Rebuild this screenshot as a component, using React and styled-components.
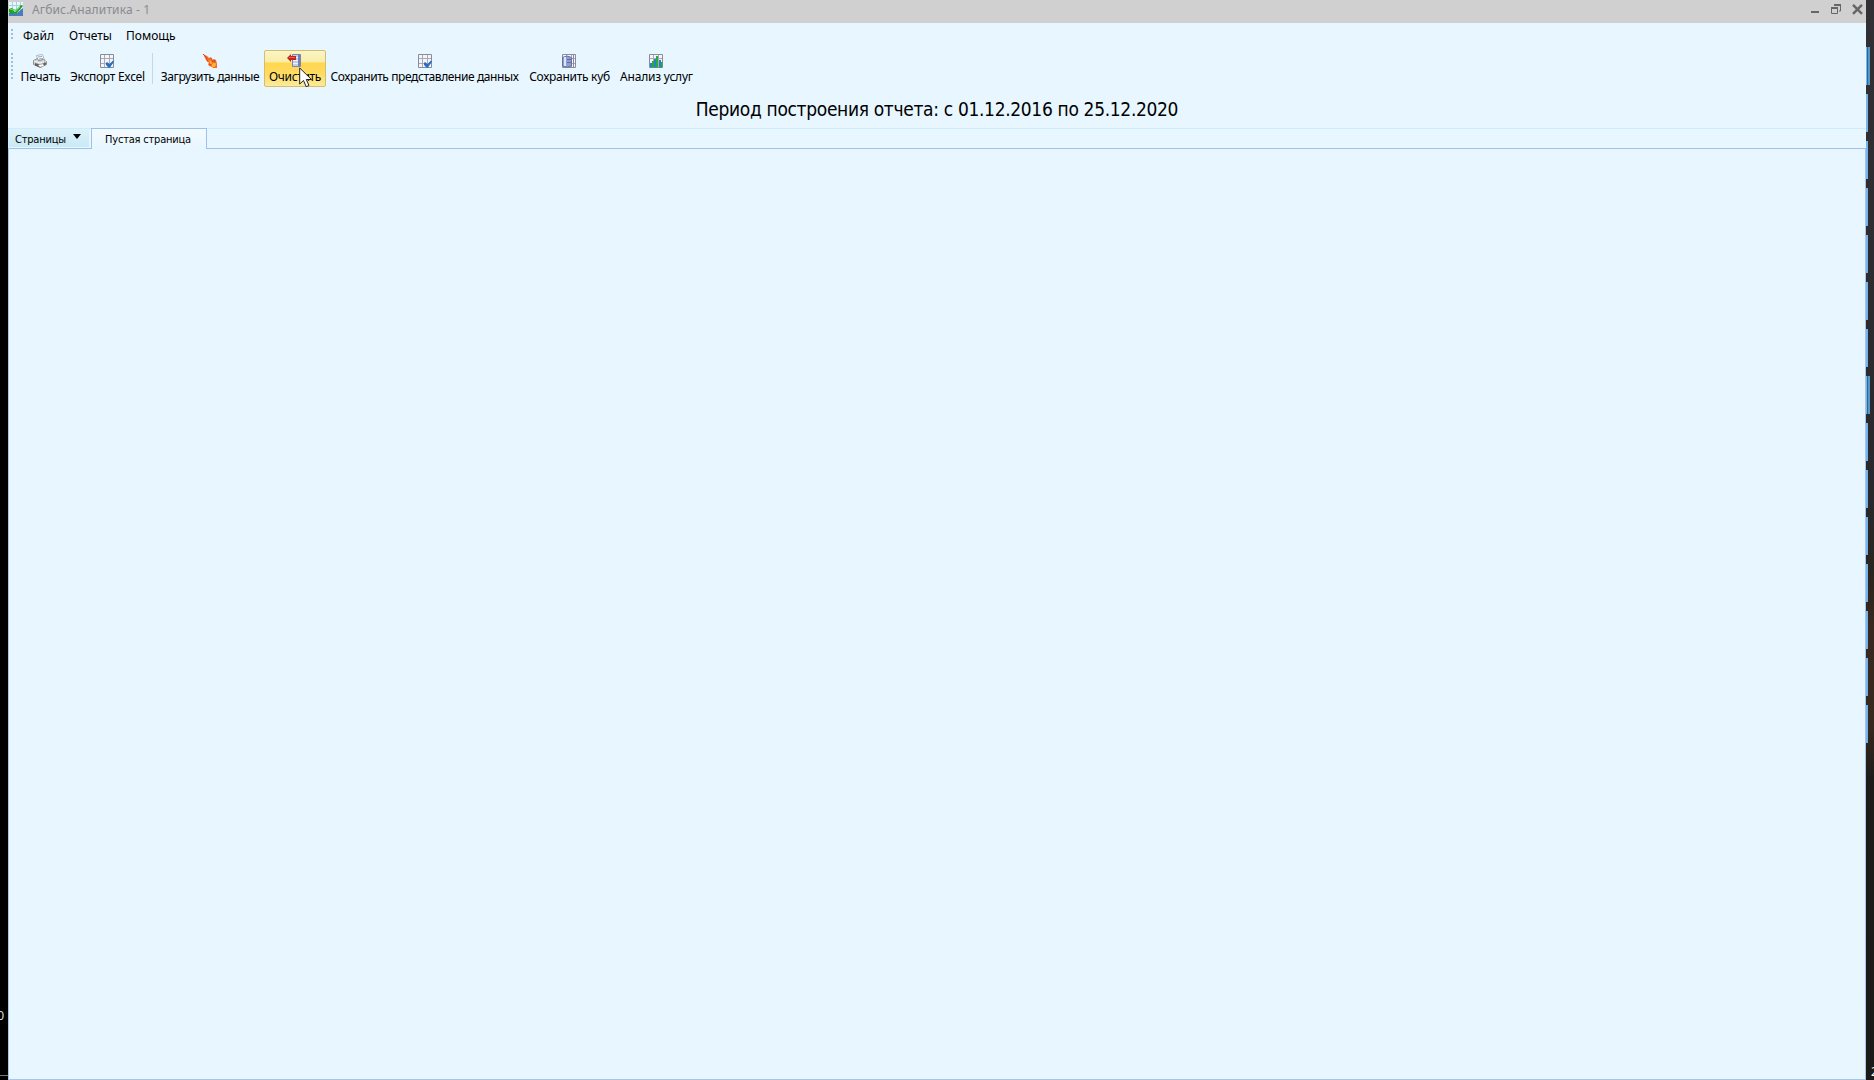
import React from "react";
import styled, { createGlobalStyle } from "styled-components";

const GlobalStyle = createGlobalStyle`
  * { box-sizing: border-box; }
  body { margin: 0; background: #000; overflow: hidden; }
`;

const Desktop = styled.div`
  display: grid;
  grid-template-columns: 8px 1858px 8px;
  width: 1874px;
  height: 1080px;
  overflow: hidden;
  background: #000;
  color: #000;
  font-family: "Noto Sans", "Open Sans", sans-serif;
  font-size: 12px;
  line-height: 16px;
  white-space: nowrap;
`;

const LeftEdge = styled.div`
  display: flex;
  flex-direction: column;
  justify-content: flex-end;
  align-items: flex-end;
  overflow: hidden;
  background: #000;
`;

const EdgeLabel = styled.span`
  color: #ddd;
  font-size: 12px;
  line-height: 16px;
  padding-right: 4px;
`;

const EdgeRule = styled.div`
  width: 8px;
  height: 1px;
  margin: 51px 0 4px;
  background: #777;
`;

const RightEdge = styled.div`
  display: flex;
  flex-direction: column;
  gap: 9px;
  padding-top: 47px;
  overflow: hidden;
  background: linear-gradient(#303035 0, #29292d 45%, #29251f 53%, #38281f 58%, #38291f 67%, #1e1c1a 72%, #1a1a19 100%);
`;

const Strip = styled.div`
  flex: none;
  width: ${(p) => (p.$active ? 4 : 2)}px;
  height: 38px;
  background: ${(p) =>
    p.$active
      ? "linear-gradient(90deg, #73b7f1 1px, #32658f 1px, #32658f 2px, #5598c7 2px)"
      : "#74b5ee"};
`;

const CornerLabel = styled.span`
  margin-top: auto;
  padding-left: 5px;
  color: #fff;
  font-size: 12px;
  line-height: 16px;
`;

const Window = styled.main`
  display: flex;
  flex-direction: column;
  min-width: 0;
  background: #e7f6ff;
`;

const TitleBar = styled.header`
  display: flex;
  align-items: flex-start;
  height: 23px;
  padding: 2px 3px 0 1px;
  background: #d0d0d0;
`;

const WindowTitle = styled.span`
  margin-left: 9px;
  color: #898b91;
  line-height: 15px;
  letter-spacing: 0.14px;
`;

const WindowButtons = styled.div`
  display: flex;
  gap: 11px;
  margin-left: auto;
  padding-top: 2px;
`;

const MenuBar = styled.nav`
  display: flex;
  align-items: center;
  height: 26px;
  padding-left: 3px;
`;

const Grip = styled.div`
  flex: none;
  width: 2px;
  height: ${(p) => p.$height}px;
  margin: ${(p) => p.$margin || "0"};
  background: repeating-linear-gradient(#9fbfdf 0, #9fbfdf 2px, transparent 2px, transparent 4px);
`;

const MenuItem = styled.span`
  width: ${(p) => p.$width}px;
`;

const ToolBar = styled.div`
  display: flex;
  align-items: flex-start;
  height: 44px;
  padding: 1px 0 0 3px;
`;

const ToolButton = styled.button`
  display: flex;
  flex: none;
  flex-direction: column;
  align-items: center;
  width: ${(p) => p.$width}px;
  height: 37px;
  margin: 0 0 0 ${(p) => p.$gap || 0}px;
  padding: 3px 0 0;
  border: 1px solid ${(p) => (p.$hot ? "#d6bd6b" : "transparent")};
  border-radius: 2px;
  background: ${(p) =>
    p.$hot ? "linear-gradient(#fbf5c8 0, #f8eda6 11px, #ffd64f 12px, #ffdc65 24px, #f9eda0 36px)" : "transparent"};
  color: inherit;
  font: inherit;
  line-height: 16px;

  svg {
    margin-left: ${(p) => Math.max(p.$nudge || 0, 0)}px;
    margin-right: ${(p) => Math.max(-(p.$nudge || 0), 0)}px;
  }
`;

const ToolLabel = styled.span`
  margin-top: 1px;
  letter-spacing: ${(p) => p.$track}px;
`;

const Divider = styled.div`
  width: 1px;
  height: 31px;
  margin: 3px 4px 0 3px;
  background: #c5d8e8;
`;

const Period = styled.h1`
  display: flex;
  align-items: center;
  justify-content: center;
  height: 35px;
  margin: 0;
  padding-bottom: 4px;
  font-family: "DejaVu Sans Condensed", "DejaVu Sans", sans-serif;
  font-stretch: condensed;
  font-size: 19px;
  font-weight: 400;
  letter-spacing: -0.33px;
  line-height: 24px;
`;

const TabStrip = styled.div`
  display: flex;
  height: 21px;
  border-top: 1px solid #ccecfb;
  border-bottom: 1px solid #9cc2ea;
  border-left: 1px solid #ccecfb;
  font-family: "DejaVu Sans Condensed", "DejaVu Sans", sans-serif;
  font-stretch: condensed;
  font-size: 11px;
  letter-spacing: -0.2px;
`;

const PagesButton = styled.div`
  display: flex;
  align-items: center;
  justify-content: space-between;
  width: 80px;
  height: 18px;
  padding: 3px 8px 0 6px;
  background: linear-gradient(#ddf2fb, #c9e9f5);
`;

const Caret = styled.i`
  margin-bottom: 6px;
  border: 4px solid transparent;
  border-top: 5px solid #000;
  border-bottom: 0;
`;

const Tab = styled.div`
  width: 116px;
  height: 21px;
  margin: -1px 0 -1px 2px;
  padding: 3px 0 0 13px;
  border: 1px solid #9cc2ea;
  border-bottom: 0;
  background: linear-gradient(#f3faff, #e7f6ff);
`;

const Page = styled.section`
  flex: 1;
  border: 1px solid #a7c5e8;
  border-top: 0;
`;

const Pointer = styled.svg`
  position: absolute;
  left: 299px;
  top: 67px;
  pointer-events: none;
`;

const Icon = ({ children }) => (
  <svg width="14" height="14" viewBox="0 0 14 14">
    {children}
  </svg>
);

const GridLines = () => (
  <>
    <path d="M.5 .5h13v13H.5z" fill="#f3f5fb" stroke="#8b8b9d" />
    <path d="M4.5 1v12M9.5 1v12M1 4.5h12M1 9.5h12" fill="none" stroke="#a8a9b8" />
  </>
);

const AppIcon = () => (
  <Icon>
    <rect width="14" height="14" fill="#e9f6fa" />
    <path d="M0 3.5h14M0 7.5h14M3.5 0v11M7.5 0v11M11.5 0v11" stroke="#a9cfe2" />
    <path d="M0 11l4-2 4 2 6-5v8H0z" fill="#4c7bc0" />
    <path d="M0 7l3-1 3 3 6-6 2 1-7 8-2-1-3 1-2-2z" fill="#18a623" />
    <path d="M1 7l3 1 2 2 5-5" stroke="#70df42" fill="none" />
  </Icon>
);

const PrinterIcon = () => (
  <Icon>
    <path d="M3.5 1.5l6-1 2 6H5z" fill="#fff" stroke="#aeb6c0" />
    <path d="M5 3l4-.5M6 5l4-.5" stroke="#7da6cf" />
    <path d="M.5 6.5l4-2 1 2 5-1 3 2v3l-6 3-7-3z" fill="#cfd0d0" stroke="#8d8f91" />
    <path d="M1 7l6 2 6-2" stroke="#f6f6f6" fill="none" />
    <path d="M2 9l5 1.5 6-2v2l-6 3-5-2z" fill="#606366" />
    <path d="M5 11l5-1 1 2-4 1z" fill="#f8f8f2" />
    <path d="M11 8h1" stroke="#54a541" />
  </Icon>
);

const CheckGridIcon = () => (
  <Icon>
    <GridLines />
    <path d="M6 9l1-1 2.5 2L13 6.5l1 1-4 6-1 .5-3-3z" fill="#2670c1" />
  </Icon>
);

const LoadIcon = () => (
  <Icon>
    <path d="M0 0l4 2 2 2 2-1 1 3 2-1 2 1 1 4v4h-4l-1-1-3-1-1-2 1-1-2-2-1-1-1-2z" fill="#f56c21" />
    <path d="M4 4l2 4 2-2 1 4 3-2 1 2-1 3H9l-2-4z" fill="#ffb13b" />
    <path d="M0 0l3 3 2 5M6 10l3 1M8 4l2 4M11 6l1 3" stroke="#d84822" fill="none" />
  </Icon>
);

const ClearIcon = () => (
  <Icon>
    <path d="M5.5 .5h8v12h-8z" fill="#c3cdec" stroke="#7b83a8" />
    <path d="M6 3.5h6M6 6.5h6M6 9.5h6" stroke="#edf1fb" />
    <path d="M12 1v11" stroke="#7682b4" strokeWidth="2" />
    <path d="M0 4l4-4v2h5v4H4v2z" fill="#c7221c" />
    <path d="M2 3.5h6" stroke="#f06243" />
  </Icon>
);

const CubeIcon = () => (
  <Icon>
    <GridLines />
    <path d="M11.5 1v12" stroke="#8789a4" />
    <path d="M.5 3.5q4.500-3 9 0v8.500q-4.500 2.500-9 0z" fill="#8f9fcf" stroke="#67739f" />
    <path d="M3 3v9" stroke="#dce5fb" strokeWidth="2" />
    <path d="M5 5.500h4M5 8.500h4" stroke="#5f6da6" />
  </Icon>
);

const ChartIcon = () => (
  <Icon>
    <GridLines />
    <path d="M1 9h2v4.500H1zM5 5h2v8.500H5zM10 6h2v7.500h-2z" fill="#2683bd" />
    <path d="M3 7h2v6.500H3zM7 2h2v11.500H7zM12 8h1.500v5.500H12z" fill="#28ab3d" />
  </Icon>
);

const tools = [
  { label: "Печать", icon: PrinterIcon, width: 47, gap: 4, track: -0.2, nudge: -1 },
  { label: "Экспорт Excel", icon: CheckGridIcon, width: 83, gap: 2, track: -0.28, nudge: -1 },
  { divider: true },
  { label: "Загрузить данные", icon: LoadIcon, width: 106, gap: 0, track: -0.4 },
  { label: "Очистить", icon: ClearIcon, width: 62, gap: 1, track: -0.35, nudge: -2, hot: true },
  { label: "Сохранить представление данных", icon: CheckGridIcon, width: 195, gap: 1, track: -0.41, nudge: 1 },
  { label: "Сохранить куб", icon: CubeIcon, width: 89, gap: 3, track: -0.28, nudge: -1 },
  { label: "Анализ услуг", icon: ChartIcon, width: 81, gap: 2, track: -0.2, nudge: -1 },
];

export default function App() {
  return (
    <>
      <GlobalStyle />
      <Desktop>
        <LeftEdge>
          <EdgeLabel>0</EdgeLabel>
          <EdgeRule />
        </LeftEdge>
        <Window>
          <TitleBar>
            <AppIcon />
            <WindowTitle>Агбис.Аналитика - 1</WindowTitle>
            <WindowButtons>
              <svg width="10" height="11"><path d="M1 8h8" stroke="#666" strokeWidth="2" /></svg>
              <svg width="10" height="11">
                <path d="M.5 4h6v5.5h-6z" fill="none" stroke="#666" />
                <path d="M0 4h7M3 1h7" stroke="#666" strokeWidth="2" />
                <path d="M9.5 1v6H8" fill="none" stroke="#666" />
              </svg>
              <svg width="11" height="11"><path d="M1 .8l9 9M10 .8l-9 9" stroke="#666" strokeWidth="2.4" /></svg>
            </WindowButtons>
          </TitleBar>
          <MenuBar>
            <Grip $height={10} $margin="-5px 10px 0 0" />
            <MenuItem $width={46}>Файл</MenuItem>
            <MenuItem $width={57}>Отчеты</MenuItem>
            <MenuItem $width={60}>Помощь</MenuItem>
          </MenuBar>
          <ToolBar>
            <Grip $height={26} $margin="3px 0 0" />
            {tools.map((t, i) =>
              t.divider ? (
                <Divider key={i} />
              ) : (
                <ToolButton key={i} $width={t.width} $gap={t.gap} $hot={t.hot} $nudge={t.nudge}>
                  <t.icon />
                  <ToolLabel $track={t.track}>{t.label}</ToolLabel>
                </ToolButton>
              )
            )}
          </ToolBar>
          <Period>Период построения отчета: с 01.12.2016 по 25.12.2020</Period>
          <TabStrip>
            <PagesButton>
              Страницы
              <Caret />
            </PagesButton>
            <Tab>Пустая страница</Tab>
          </TabStrip>
          <Page />
        </Window>
        <RightEdge>
          {Array.from({ length: 15 }, (_, i) => (
            <Strip key={i} $active={i === 0 || i === 7} />
          ))}
          <CornerLabel>2</CornerLabel>
        </RightEdge>
      </Desktop>
      <Pointer width="14" height="21" viewBox="0 0 14 21">
        <path d="M.7 1v16l3.8-3.5 2.7 6.2 2.8-1.2-2.7-6h5.2z" fill="#fff" stroke="#222" />
      </Pointer>
    </>
  );
}
